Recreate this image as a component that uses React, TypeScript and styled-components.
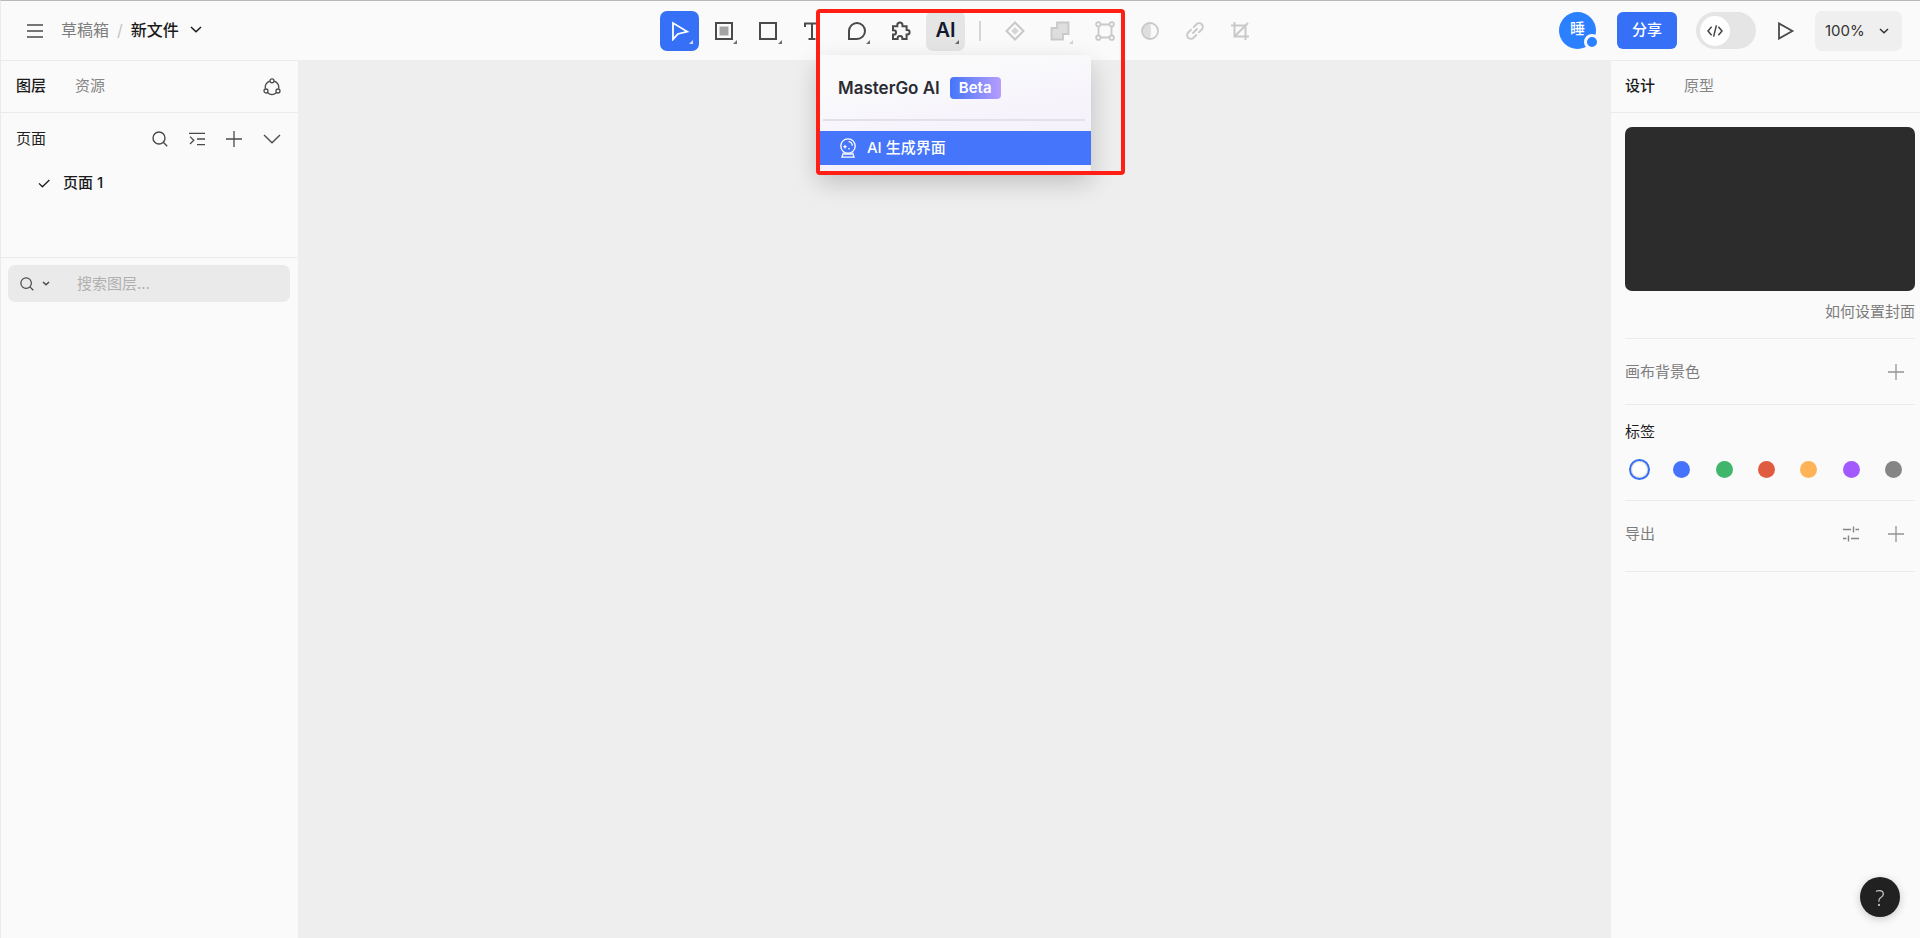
import React from "react";
import styled, { createGlobalStyle, css } from "styled-components";

const sans = `"Inter", "Noto Sans CJK SC", sans-serif`;

const GlobalStyle = createGlobalStyle`
  *, *::before, *::after { box-sizing: border-box; }
  html, body { margin: 0; }
  body { font-family: ${sans}; font-size: 15px; line-height: 20px; color: #1f1f1f; background: #fafafa; }
  button, input, select { font: inherit; color: inherit; }
  button { border: 0; padding: 0; background: none; cursor: pointer; }
  svg { display: block; fill: none; stroke: currentColor; }
`;

const Shell = styled.div`
  min-height: 100vh;
  display: flex;
  flex-direction: column;
  border-top: 1px solid #b9b9b9;
  border-left: 1px solid #e6ecf2;
  background: #fafafa;
`;

const Header = styled.header`
  height: 59px;
  display: grid;
  grid-template-columns: 1fr auto 1fr;
  align-items: center;
`;

const Crumbs = styled.nav`
  display: flex;
  align-items: center;
  padding-left: 26px;
  font-size: 16px;
`;

const IconButton = styled.button<{ $color?: string }>`
  display: flex;
  align-items: center;
  justify-content: center;
  flex: none;
  color: ${(p) => p.$color ?? "#4a4a4a"};
`;

const CrumbLink = styled.a`
  margin-left: 18px;
  padding-bottom: 2px;
  color: #7d7d7d;
  text-decoration: none;
`;

const Slash = styled.span`
  margin: 0 8px;
  padding-bottom: 2px;
  color: #c4c4c4;
`;

const FileName = styled.button`
  display: flex;
  align-items: center;
  gap: 11px;
  padding-bottom: 2px;
  font-weight: 500;
  color: #1a1a1a;
`;

const Toolbar = styled.div`
  display: flex;
  align-items: center;
  padding-right: 2px;
`;

const ToolGroup = styled.div<{ $width: number }>`
  width: ${(p) => p.$width}px;
  display: flex;
  justify-content: space-between;
`;

const Tool = styled.button<{ $state?: "active" | "open" | "disabled" }>`
  position: relative;
  width: 39px;
  height: 40px;
  display: flex;
  align-items: center;
  justify-content: center;
  border-radius: 7px;
  color: #4a4a4a;
  ${(p) => p.$state === "active" && css`background: #3670f7; color: #fff;`}
  ${(p) => p.$state === "open" && css`background: #e5e5e5;`}
  ${(p) => p.$state === "disabled" && css`color: #c9c9c9; cursor: default;`}
`;

const Corner = styled.i`
  position: absolute;
  right: 6px;
  bottom: 7px;
  border: 2px solid currentColor;
  border-top-color: transparent;
  border-left-color: transparent;
  opacity: 0.8;
`;

const AiMark = styled.span`
  padding-bottom: 2px;
  font-size: 20px;
  font-weight: 600;
  color: #111a2c;
`;

const ToolDivider = styled.span`
  width: 2px;
  height: 20px;
  margin: 0 14px;
  background: #d6d6d6;
`;

const MenuAnchor = styled.div`
  position: relative;
`;

const Menu = styled.div`
  position: absolute;
  z-index: 2;
  top: 44px;
  left: -108px;
  width: 273px;
  padding-bottom: 7px;
  border-radius: 4px;
  background: linear-gradient(170deg, #fafafb 20%, #f4f0fb 80%, #f6f3fb);
  box-shadow: 0 10px 26px rgba(0, 0, 0, 0.2);
`;

const MenuTitle = styled.div`
  height: 66px;
  margin: 0 6px 10px 5px;
  padding: 2px 0 0 15px;
  display: flex;
  align-items: center;
  gap: 10px;
  border-bottom: 2px solid #e4e0e9;
  font-size: 17px;
  font-weight: 600;
  color: #2b2b33;
`;

const Beta = styled.span`
  height: 22px;
  padding: 0 9px;
  border-radius: 4px;
  background: linear-gradient(90deg, #4475fa, #b79dff);
  font-size: 15px;
  line-height: 22px;
  color: #fff;
`;

const MenuItem = styled.button`
  width: 100%;
  height: 34px;
  padding-left: 21px;
  display: flex;
  align-items: center;
  gap: 10px;
  background: #4475fa;
  color: #fff;
  font-weight: 500;
`;

const Highlight = styled.div`
  position: absolute;
  z-index: 3;
  top: -2px;
  left: -110px;
  width: 309px;
  height: 166px;
  border: 4px solid #ff1f14;
  border-radius: 4px;
  pointer-events: none;
`;

const Actions = styled.div`
  display: flex;
  align-items: center;
  justify-content: flex-end;
  padding-right: 18px;
`;

const Avatar = styled.div`
  position: relative;
  width: 37px;
  height: 37px;
  border-radius: 50%;
  background: #2b80ff;
  color: #fff;
  font-size: 15px;
  font-weight: 500;
  line-height: 34px;
  text-align: center;
`;

const Presence = styled.i`
  position: absolute;
  right: -4px;
  bottom: -1px;
  width: 16px;
  height: 16px;
  border: 3px solid #fafafa;
  border-radius: 50%;
  background: #2b80ff;
`;

const Share = styled.button`
  width: 60px;
  height: 37px;
  margin: 0 19px 0 21px;
  padding-bottom: 2px;
  border-radius: 6px;
  background: #3670f7;
  color: #fff;
  font-weight: 500;
`;

const DevSwitch = styled.button`
  width: 60px;
  height: 37px;
  padding: 0 4px;
  margin-right: 21px;
  border-radius: 19px;
  background: #e5e5e5;
`;

const Knob = styled.span`
  width: 30px;
  height: 30px;
  display: flex;
  align-items: center;
  justify-content: center;
  border-radius: 50%;
  background: #fff;
  color: #444;
`;

const Zoom = styled.button`
  width: 87px;
  height: 40px;
  margin-left: 20px;
  padding-left: 10px;
  display: flex;
  align-items: center;
  gap: 14px;
  border-radius: 7px;
  background: #efefef;
  color: #333;
`;

const Body = styled.div`
  flex: 1;
  display: flex;
`;

const LeftPanel = styled.aside`
  width: 297px;
  border-top: 1px solid #ebebeb;
`;

const Canvas = styled.main`
  flex: 1;
  background: #eee;
`;

const RightPanel = styled.aside`
  width: 309px;
  border-top: 1px solid #ebebeb;
`;

const Tabs = styled.div<{ $left: number }>`
  height: 52px;
  padding: 0 17px 0 ${(p) => p.$left}px;
  display: flex;
  align-items: center;
  gap: 29px;
  border-bottom: 1px solid #ebebeb;
`;

const Tab = styled.button<{ $on?: boolean }>`
  padding-bottom: 2px;
  color: ${(p) => (p.$on ? "#1a1a1a" : "#858585")};
  font-weight: ${(p) => (p.$on ? 500 : 400)};
`;

const Spacer = styled.span`
  flex: 1;
`;

const PageHead = styled.div`
  height: 51px;
  padding: 0 17px 0 15px;
  display: flex;
  align-items: center;
  gap: 21px;
`;

const PageList = styled.div`
  height: 94px;
  border-bottom: 1px solid #ebebeb;
`;

const PageItem = styled.button`
  height: 38px;
  padding-left: 37px;
  display: flex;
  align-items: center;
  gap: 13px;
  font-weight: 500;
  color: #1a1a1a;
`;

const Search = styled.label`
  height: 37px;
  margin: 7px 8px 0 7px;
  padding-left: 12px;
  display: flex;
  align-items: center;
  gap: 8px;
  border-radius: 7px;
  background: #eaeaea;
  color: #4a4a4a;
`;

const SearchInput = styled.input`
  flex: 1;
  min-width: 0;
  padding: 0 0 0 19px;
  border: 0;
  outline: 0;
  background: none;
  &::placeholder { color: #b0b0b0; opacity: 1; }
`;

const Inspector = styled.div`
  padding: 14px 5px 0 14px;
`;

const Cover = styled.div`
  height: 164px;
  border-radius: 7px;
  background: #2c2c2c;
`;

const Section = styled.section<{ $height: number; $bottom?: number }>`
  height: ${(p) => p.$height}px;
  padding-bottom: ${(p) => p.$bottom ?? 0}px;
  display: flex;
  align-items: center;
  border-bottom: 1px solid #ebebeb;
  color: #7d7d7d;
`;

const HelpLink = styled.a`
  margin-left: auto;
  color: #7d7d7d;
  text-decoration: none;
`;

const SectionActions = styled.div`
  margin-left: auto;
  padding-right: 11px;
  display: flex;
  gap: 29px;
`;

const TagSection = styled.fieldset`
  height: 96px;
  margin: 0;
  padding: 17px 0 0;
  border: 0;
  border-bottom: 1px solid #ebebeb;
`;

const TagTitle = styled.legend`
  float: left;
  width: 100%;
  padding: 0;
  color: #1f1f1f;
`;

const Swatches = styled.div`
  clear: both;
  padding: 19px 13px 0 6px;
  display: flex;
  justify-content: space-between;
`;

const Swatch = styled.input<{ $color: string }>`
  appearance: none;
  width: 17px;
  height: 17px;
  margin: 0;
  border-radius: 50%;
  background: ${(p) => p.$color};
  &:checked { box-shadow: 0 0 0 2px #3670f7, inset 0 0 2px #999; }
`;

const Help = styled.button`
  position: fixed;
  right: 20px;
  bottom: 21px;
  width: 40px;
  height: 40px;
  border-radius: 50%;
  background: #212121;
  color: #c8c8c8;
  font-family: "Noto Sans", sans-serif;
  font-size: 22px;
  font-weight: 300;
  box-shadow: 0 2px 8px rgba(0, 0, 0, 0.2);
`;

const Svg = ({ w = 18, h = w, sw = 2, children }: { w?: number; h?: number; sw?: number; children: React.ReactNode }) => (
  <svg width={w} height={h} viewBox={`0 0 ${w} ${h}`} strokeWidth={sw} aria-hidden="true">{children}</svg>
);

const Chevron = ({ w, h, sw = 1.5 }: { w: number; h: number; sw?: number }) => (
  <Svg w={w} h={h} sw={sw}><path d={`M1 1L${w / 2} ${h - 1.2}L${w - 1} 1`} /></Svg>
);
const Plus = () => <Svg w={16} sw={1.3}><path d="M8 0V16M0 8H16" /></Svg>;
const Magnifier = ({ w = 16 }: { w?: number }) => (
  <svg width={w} height={w} viewBox="0 0 16 16" strokeWidth={1.4} aria-hidden="true">
    <circle cx="7" cy="7" r="6" /><path d="M11.3 11.3L15.2 15.2" />
  </svg>
);

const leftTools = [
  { name: "移动", state: "active" as const, corner: true, icon: <Svg w={20} sw={1.8}><path d="M3 2V18.4L7.8 13L17.2 10.6Z" strokeLinejoin="miter" /></Svg> },
  { name: "容器", corner: true, icon: <Svg><rect x="1" y="1" width="16" height="16" /><rect x="5" y="5" width="8" height="8" fill="#a3a3a3" stroke="#a3a3a3" strokeWidth="1" /></Svg> },
  { name: "矩形", corner: true, icon: <Svg><rect x="1" y="1" width="16" height="16" /></Svg> },
  { name: "文本", icon: <Svg sw={2}><path d="M2 5V1.5H16V5M9 1.5V17M5.5 17H12.5" /></Svg> },
  { name: "评论", corner: true, icon: <Svg><path d="M1 17V9A8 8 0 1 1 9 17Z" /></Svg> },
  { name: "插件", icon: <Svg w={20} sw={2}><path d="M2 5.2H6.3V4.2A2.6 2.6 0 0 1 11.5 4.2V5.2H15.6V9H16.3A2.3 2.3 0 0 1 16.3 13.6H15.6V18H11.4V17.4A2.4 2.4 0 0 0 6.6 17.4V18H2V13.6H2.8A2.2 2.2 0 0 0 2.8 9.2H2Z" /></Svg> },
];

const rightTools = [
  { name: "组件", icon: <Svg w={20}><path d="M10 1.5L18.5 10L10 18.5L1.5 10Z" /><path d="M10 6.2L13.8 10L10 13.8L6.2 10Z" fill="#d6d6d6" stroke="none" /></Svg> },
  { name: "布尔运算", corner: true, icon: <Svg w={20} sw={1.8}><path d="M7 1.5H18.5V13H13V18.5H1.5V7H7Z" fill="#dedede" /></Svg> },
  { name: "编辑对象", icon: <Svg w={20} sw={1.8}><path d="M5 3.5H15M5 16.5H15M3.5 5V15M16.5 5V15" /><circle cx="3.3" cy="3.3" r="2.2" fill="#fafafa" /><circle cx="16.7" cy="3.3" r="2.2" fill="#fafafa" /><circle cx="3.3" cy="16.7" r="2.2" fill="#fafafa" /><circle cx="16.7" cy="16.7" r="2.2" fill="#fafafa" /></Svg> },
  { name: "蒙版", icon: <Svg sw={1.8}><path d="M9 1A8 8 0 0 0 9 17Q11 9 9 1Z" fill="#dedede" stroke="none" /><circle cx="9" cy="9" r="8" /></Svg> },
  { name: "链接", icon: <svg width="20" height="20" viewBox="0 0 24 24" strokeWidth="2.3" strokeLinecap="round" aria-hidden="true"><path d="M9.6 14.4L14.4 9.6M10.5 7.2L13.8 3.9A4.4 4.4 0 0 1 20.1 10.2L16.8 13.5M7.2 10.5L3.9 13.8A4.4 4.4 0 0 0 10.2 20.1L13.5 16.8" /></svg> },
  { name: "裁剪", icon: <Svg sw={2}><path d="M3.5 0V14.5H18M0 3.5H14.5V18M3.5 14.5L17 1" /></Svg> },
];

const tags = [
  ["无", "#fff"], ["蓝色", "#4673fb"], ["绿色", "#3fb66b"], ["红色", "#e05c41"],
  ["橙色", "#ffb358"], ["紫色", "#a259ff"], ["灰色", "#858585"],
];

export default function App() {
  return (
    <Shell>
      <GlobalStyle />
      <Header>
        <Crumbs aria-label="文件路径">
          <IconButton aria-label="主菜单"><Svg w={16} h={14} sw={1.4}><path d="M0 1H16M0 7H16M0 13H16" /></Svg></IconButton>
          <CrumbLink href="#drafts">草稿箱</CrumbLink>
          <Slash>/</Slash>
          <FileName>新文件<Chevron w={12} h={7} /></FileName>
        </Crumbs>
        <Toolbar role="toolbar" aria-label="工具">
          <ToolGroup $width={305}>
            {leftTools.map((t) => (
              <Tool key={t.name} aria-label={t.name} $state={t.state}>{t.icon}{t.corner && <Corner />}</Tool>
            ))}
            <MenuAnchor>
              <Tool aria-label="AI" aria-expanded="true" $state="open"><AiMark>AI</AiMark><Corner /></Tool>
              <Menu role="menu">
                <MenuTitle>MasterGo AI<Beta>Beta</Beta></MenuTitle>
                <MenuItem role="menuitem">
                  <Svg w={18} h={20} sw={1.3}>
                    <circle cx="9" cy="8" r="7.2" />
                    <path d="M4.5 14.5L3 19.2H15L13.5 14.5M5 16H13M9.5 3.6A4.4 4.4 0 0 1 13.4 7.8" />
                    <path d="M6 6.2L6.7 8L8.4 8.7L6.7 9.4L6 11.2L5.3 9.4L3.6 8.7L5.3 8ZM10 9.8L11 10.8L10 11.8L9 10.8Z" fill="currentColor" stroke="none" />
                  </Svg>
                  AI 生成界面
                </MenuItem>
              </Menu>
              <Highlight />
            </MenuAnchor>
          </ToolGroup>
          <ToolDivider />
          <ToolGroup $width={264}>
            {rightTools.map((t) => (
              <Tool key={t.name} aria-label={t.name} $state="disabled" disabled>{t.icon}{t.corner && <Corner />}</Tool>
            ))}
          </ToolGroup>
        </Toolbar>
        <Actions>
          <Avatar>睡<Presence /></Avatar>
          <Share>分享</Share>
          <DevSwitch role="switch" aria-checked="false" aria-label="研发模式">
            <Knob><Svg w={16} h={12} sw={1.5}><path d="M4.6 1.8L1 6L4.6 10.2M11.4 1.8L15 6L11.4 10.2M9.4 0.4L6.6 11.6" /></Svg></Knob>
          </DevSwitch>
          <IconButton aria-label="演示"><Svg w={18} sw={1.8}><path d="M2 1.4V16.6L15.4 9Z" /></Svg></IconButton>
          <Zoom>100%<Chevron w={10} h={6} /></Zoom>
        </Actions>
      </Header>
      <Body>
        <LeftPanel>
          <Tabs $left={15}>
            <Tab $on>图层</Tab>
            <Tab>资源</Tab>
            <Spacer />
            <IconButton aria-label="团队库">
              <Svg w={18} sw={1.3}>
                <path d="M6.8 3.2A7 7 0 0 0 2.3 10.6M11.2 3.2A7 7 0 0 1 15.7 10.6M4.6 14.8A7 7 0 0 0 13.4 14.8" />
                <circle cx="9" cy="2.8" r="2" /><circle cx="3" cy="13" r="2" /><circle cx="15" cy="13" r="2" />
              </Svg>
            </IconButton>
          </Tabs>
          <PageHead>
            <span>页面</span>
            <Spacer />
            <IconButton aria-label="搜索页面"><Magnifier /></IconButton>
            <IconButton aria-label="折叠"><Svg w={16} h={14} sw={1.3}><path d="M0 1.3H16M8 7H16M8 12.7H16M1 4.6L4.8 8.3L1 12" /></Svg></IconButton>
            <IconButton aria-label="新建页面"><Plus /></IconButton>
            <IconButton aria-label="收起"><Chevron w={18} h={10} sw={1.3} /></IconButton>
          </PageHead>
          <PageList>
            <PageItem><Svg w={12} h={9} sw={1.3}><path d="M1 4.4L4.4 7.8L11.4 1" /></Svg>页面 1</PageItem>
          </PageList>
          <Search>
            <Magnifier w={14} />
            <Chevron w={8} h={5} />
            <SearchInput placeholder="搜索图层..." aria-label="搜索图层" />
          </Search>
        </LeftPanel>
        <Canvas />
        <RightPanel>
          <Tabs $left={14}>
            <Tab $on>设计</Tab>
            <Tab>原型</Tab>
          </Tabs>
          <Inspector>
            <Cover />
            <Section $height={48} $bottom={6}><HelpLink href="#cover">如何设置封面</HelpLink></Section>
            <Section $height={66}>
              画布背景色
              <SectionActions><IconButton $color="#949494" aria-label="添加背景色"><Plus /></IconButton></SectionActions>
            </Section>
            <TagSection>
              <TagTitle>标签</TagTitle>
              <Swatches>
                {tags.map(([name, color], i) => (
                  <Swatch key={name} type="radio" name="tag" aria-label={name} $color={color} defaultChecked={i === 0} />
                ))}
              </Swatches>
            </TagSection>
            <Section $height={71} $bottom={4}>
              导出
              <SectionActions>
                <IconButton $color="#858585" aria-label="导出设置"><Svg w={16} sw={1.4}><path d="M0 3.5H8M10.5 0.5V6.5M12.5 3.5H16M0 12.5H3.5M5.5 9.5V15.5M8 12.5H16" /></Svg></IconButton>
                <IconButton $color="#949494" aria-label="添加导出"><Plus /></IconButton>
              </SectionActions>
            </Section>
          </Inspector>
        </RightPanel>
      </Body>
      <Help aria-label="帮助">?</Help>
    </Shell>
  );
}
